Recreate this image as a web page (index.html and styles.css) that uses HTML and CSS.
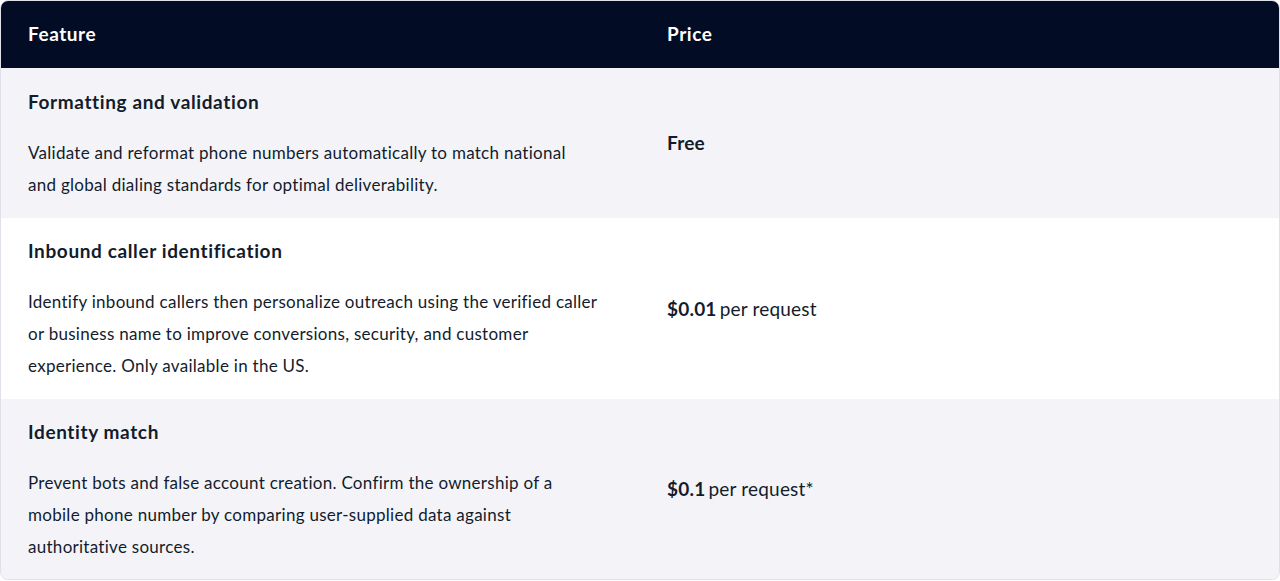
FILE: index.html
```html
<!DOCTYPE html>
<html lang="en">
<head>
<meta charset="utf-8">
<title>Pricing</title>
<link rel="stylesheet" href="styles.css">
</head>
<body>
<div class="table-wrap">
  <table class="pricing">
    <thead>
      <tr>
        <th class="col-feature">Feature</th>
        <th class="col-price">Price</th>
      </tr>
    </thead>
    <tbody>
      <tr class="row-alt row-first">
        <td class="feature">
          <h3 class="feature-title">Formatting and validation</h3>
          <p class="feature-desc">Validate and reformat phone numbers automatically to match national<br>and global dialing standards for optimal deliverability.</p>
        </td>
        <td class="price"><strong>Free</strong></td>
      </tr>
      <tr>
        <td class="feature">
          <h3 class="feature-title">Inbound caller identification</h3>
          <p class="feature-desc">Identify inbound callers then personalize outreach using the verified caller<br>or business name to improve conversions, security, and customer<br>experience. Only available in the US.</p>
        </td>
        <td class="price"><strong>$0.01</strong> per request</td>
      </tr>
      <tr class="row-alt row-last">
        <td class="feature">
          <h3 class="feature-title">Identity match</h3>
          <p class="feature-desc">Prevent bots and false account creation. Confirm the ownership of a<br>mobile phone number by comparing user-supplied data against<br>authoritative sources.</p>
        </td>
        <td class="price"><strong>$0.1</strong> per request*</td>
      </tr>
    </tbody>
  </table>
</div>
</body>
</html>
```
FILE: styles.css
```css
html, body {
  margin: 0;
  padding: 0;
  background: #ffffff;
}
body {
  font-family: "Lato", "Noto Sans", sans-serif;
  color: #121c2d;
}
.table-wrap {
  border: 1px solid #dfe1e8;
  border-radius: 8px;
  overflow: hidden;
}
.pricing {
  width: 100%;
  border-collapse: collapse;
  table-layout: fixed;
}
.pricing th {
  background: #020c24;
  color: #ffffff;
  font-size: 19px;
  letter-spacing: 0.55px;
  font-weight: 700;
  text-align: left;
  height: 67px;
  padding: 0 27px 2px;
  box-sizing: border-box;
  line-height: 28px;
}
.col-feature, .col-price {
  width: 50%;
}
.pricing td {
  vertical-align: middle;
}
.row-alt td {
  background: #f4f4f8;
}
.feature {
  padding: 19px 16px 17px 27px;
}
.row-first .feature {
  padding-top: 20px;
}
.row-last .feature {
  padding-bottom: 16px;
}
.feature-title {
  margin: 0 0 21px;
  font-size: 19px;
  letter-spacing: 0.62px;
  line-height: 28px;
  font-weight: 700;
}
.feature-desc {
  margin: 0;
  font-size: 17px;
  letter-spacing: 0.28px;
  line-height: 32px;
}
.price {
  padding: 0 27px;
  font-size: 19px;
  letter-spacing: 0.2px;
  line-height: 28px;
}
.price strong {
  font-weight: 700;
  margin-right: -2px;
}
```
